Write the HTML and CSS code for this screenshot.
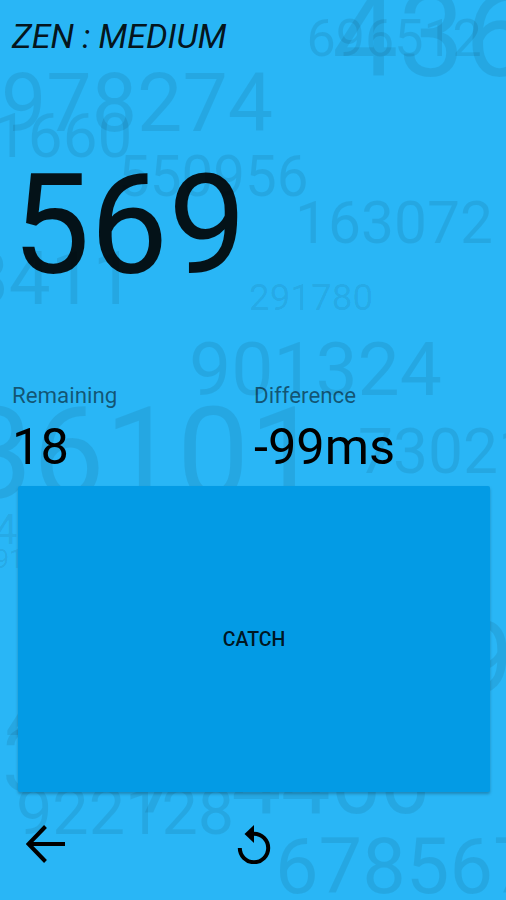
FILE: index.html
```html
<!DOCTYPE html>
<html lang="en">
<head>
<meta charset="utf-8">
<title>Zen : Medium</title>
<link rel="stylesheet" href="styles.css">
</head>
<body>
<main class="game">
  <svg class="backdrop" viewBox="0 0 506 900" aria-hidden="true">
    <text x="332" y="75.5" font-size="118">436</text>
    <text x="306.5" y="56" font-size="52">696512</text>
    <text x="1" y="130.500" font-size="80.7">978274</text>
    <text x="-7" y="156.5" font-size="62">1660</text>
    <text x="118" y="195.5" font-size="56.5">550956</text>
    <text x="295" y="242.7" font-size="58.7">163072</text>
    <text x="-33" y="304" font-size="74.5">3411</text>
    <text x="249" y="309.5" font-size="36.800">291780</text>
    <text x="189" y="394.500" font-size="75">901324</text>
    <text x="-39.6" y="498" font-size="128.500">36101</text>
    <text x="358" y="472.5" font-size="62.3">73021</text>
    <text x="-6" y="544" font-size="42">4</text>
    <text x="-5" y="568" font-size="25">91</text>
    <text x="455" y="695" font-size="104">9</text>
    <text x="5" y="750" font-size="90">4</text>
    <text x="2" y="791" font-size="88">3</text>
    <text x="16" y="833.5" font-size="64.7">922128</text>
    <text x="133.5" y="812.5" font-size="88">7</text>
    <text x="231.5" y="812.5" font-size="88">4466</text>
    <text x="275" y="893" font-size="77.6">678567</text>
  </svg>
  <h1 class="title">ZEN : MEDIUM</h1>
  <div class="number">569</div>
  <dl class="stats">
    <div><dt>Remaining</dt><dd>18</dd></div>
    <div><dt>Difference</dt><dd>-99ms</dd></div>
  </dl>
  <button class="catch" type="button">CATCH</button>
  <nav class="actions">
    <button type="button" aria-label="Back"><svg viewBox="0 0 40 40"><path d="M39 20H3M19.5 2.5L2.5 20L19.5 37.5" /></svg></button>
    <button type="button" aria-label="Restart"><svg viewBox="0 0 40 40"><path d="M20 9.8A14.2 14.2 0 1 1 5.8 24" /><path class="head" d="M20 1V19L10.5 10Z" /></svg></button>
  </nav>
</main>
</body>
</html>
```
FILE: styles.css
```css
* { box-sizing: border-box; }
body { margin: 0; font-family: Roboto, sans-serif; }
.game {
  position: relative;
  isolation: isolate;
  display: flex;
  flex-direction: column;
  height: 900px;
  overflow: hidden;
  background: #29b6f6;
  color: #000;
}
.backdrop {
  position: absolute;
  inset: 0;
  z-index: -1;
  width: 506px;
  height: 900px;
}
.backdrop text { fill: #000; fill-opacity: .08; }
.title {
  margin: 16px 0 0 12px;
  font-size: 33.9px;
  line-height: 42px;
  font-weight: 400;
  font-style: italic;
  color: rgba(0, 0, 0, .9);
}
.number {
  margin: 83px 0 0 12px;
  font-size: 139px;
  line-height: 170px;
  color: rgba(0, 0, 0, .9);
}
.stats {
  display: grid;
  grid-template-columns: 242px 1fr;
  margin: 71px 0 0;
  padding-left: 12px;
}
.stats dt {
  font-size: 22.3px;
  line-height: 26px;
  color: rgba(0, 0, 0, .54);
}
.stats dd {
  margin: 9px 0 0;
  font-size: 50.5px;
  line-height: 60px;
}
.catch {
  flex: none;
  width: 472px;
  height: 306px;
  margin: 9px 0 0 18px;
  padding: 2px 0 0;
  border: 0;
  border-radius: 2px;
  background: #039be5;
  box-shadow: 0 2px 3px rgba(0, 0, 0, .25);
  font: 500 19.5px/24px Roboto, sans-serif;
  color: rgba(0, 0, 0, .87);
}
.actions {
  display: flex;
  gap: 168px;
  margin: 32px 0 0 26px;
}
.actions button {
  width: 40px;
  height: 40px;
  padding: 0;
  border: 0;
  background: none;
}
.actions svg {
  display: block;
  width: 40px;
  height: 40px;
  fill: none;
  stroke: #000;
  stroke-width: 4;
}
.actions .head { fill: #000; stroke: none; }
```
